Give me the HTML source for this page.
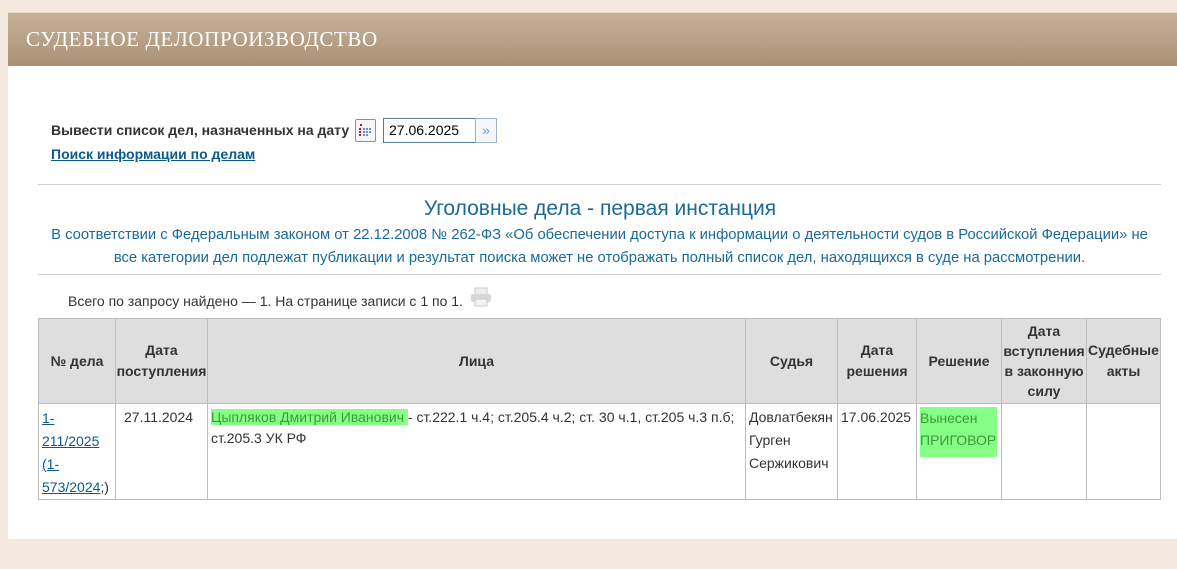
<!DOCTYPE html>
<html><head><meta charset="utf-8"><style>
*{margin:0;padding:0;box-sizing:border-box}
body{width:1177px;height:569px;background:#f3e9df;font-family:"Liberation Sans",Arial,sans-serif;position:relative;overflow:hidden;font-size:14px;color:#333}
.panel{position:absolute;left:8px;top:12px;width:1169px;height:527px;background:#fff;border-top:1px solid #e0d6ca}
.hdr{position:absolute;left:8px;top:13px;width:1169px;height:53px;background:linear-gradient(#c6b299,#a99075)}
.hdr span{position:absolute;left:18px;top:14px;font-family:"Liberation Serif",serif;font-size:21px;color:#fff;letter-spacing:0.6px}
.a{position:absolute;white-space:nowrap}
.hr{position:absolute;left:38px;width:1123px;height:1px;background:#d0d0d0}
table{position:absolute;left:38px;top:318px;border-collapse:collapse;width:1123px;table-layout:fixed}
td,th{border:1px solid #bdbdbd;font-size:14px;line-height:21px;vertical-align:top}
th{background:#dedede;color:#333;font-weight:bold;vertical-align:middle;text-align:center;height:85px;padding:0}
td{height:94px;padding:3px 3px 0 3px;color:#333}
.g{background:#86ff86;color:#3a9a3a}
a{color:#0a5a8f}
</style></head><body>
<div class="panel"></div>
<div class="hdr"><span>СУДЕБНОЕ ДЕЛОПРОИЗВОДСТВО</span></div>
<div class="a" style="left:51px;top:122px;font-weight:bold;font-size:14px;color:#333">Вывести список дел, назначенных на дату</div>
<div class="a" style="left:355px;top:119px;width:21px;height:23px;border:1px solid #7b93b5;border-radius:2px;background:#f4f6fa">
<svg width="19" height="21"><rect x="4" y="4" width="2" height="2" fill="#b22"/><g fill="#b22"><rect x="3" y="8" width="2" height="2"/><rect x="3" y="11" width="2" height="2"/><rect x="3" y="14" width="2" height="2"/></g><g fill="#6a8fc8"><rect x="7" y="8" width="2" height="2"/><rect x="10" y="8" width="2" height="2"/><rect x="13" y="8" width="2" height="2"/><rect x="7" y="11" width="2" height="2"/><rect x="10" y="11" width="2" height="2"/><rect x="13" y="11" width="2" height="2"/><rect x="7" y="14" width="2" height="2"/><rect x="10" y="14" width="2" height="2"/></g></svg></div>
<div class="a" style="left:383px;top:118px;width:93px;height:25px;border:1px solid #5a7aa0;padding:3px 0 0 5px;font-size:14px;color:#000">27.06.2025</div>
<div class="a" style="left:475px;top:118px;width:22px;height:25px;border:1px solid #a0b0c8;background:#f4f6fa;color:#6aa0d8;font-size:14px;text-align:center;line-height:23px">»</div>
<div class="a" style="left:51px;top:146px;font-weight:bold"><a href="#">Поиск информации по делам</a></div>
<div class="hr" style="top:184px"></div>
<div class="a" style="left:0;width:1200px;text-align:center;top:197px;font-size:21px;color:#1a6a9a">Уголовные дела - первая инстанция</div>
<div class="a" style="left:38px;width:1123px;text-align:center;top:224px;font-size:14.8px;line-height:23px;color:#1a6a9a;white-space:normal">В соответствии с Федеральным законом от 22.12.2008 № 262-ФЗ «Об обеспечении доступа к информации о деятельности судов в Российской Федерации» не все категории дел подлежат публикации и результат поиска может не отображать полный список дел, находящихся в суде на рассмотрении.</div>
<div class="hr" style="top:274px"></div>
<div class="a" style="left:68px;top:293px;font-size:14px">Всего по запросу найдено — 1. На странице записи с 1 по 1.</div>
<svg class="a" style="left:470px;top:287px" width="22" height="20"><rect x="5" y="1" width="12" height="7" fill="#eee" stroke="#ccc"/><rect x="1" y="7" width="20" height="8" rx="2" fill="#d8d8d8"/><rect x="5" y="12" width="12" height="7" fill="#f2f2f2" stroke="#ccc"/></svg>
<table>
<colgroup><col style="width:77px"><col style="width:92px"><col style="width:538px"><col style="width:92px"><col style="width:79px"><col style="width:85px"><col style="width:85px"><col></colgroup>
<tr><th>№ дела</th><th>Дата<br>поступления</th><th>Лица</th><th>Судья</th><th>Дата<br>решения</th><th>Решение</th><th style="line-height:20px">Дата<br>вступления<br>в законную<br>силу</th><th>Судебные<br>акты</th></tr>
<tr><td style="line-height:23px;padding-top:3px"><a href="#">1-<br>211/2025</a><br><a href="#">(1-<br>573/2024</a>;)</td><td style="padding-left:8px">27.11.2024</td><td><span class="g">Цыпляков Дмитрий Иванович </span>- ст.222.1 ч.4; ст.205.4 ч.2; ст. 30 ч.1, ст.205 ч.3 п.б; ст.205.3 УК РФ</td><td style="line-height:23px;padding-top:2px">Довлатбекян Гурген Сержикович</td><td>17.06.2025</td><td><div class="g" style="width:77px;line-height:22px;padding-bottom:6px">Вынесен ПРИГОВОР</div></td><td></td><td></td></tr>
</table>
</body></html>
